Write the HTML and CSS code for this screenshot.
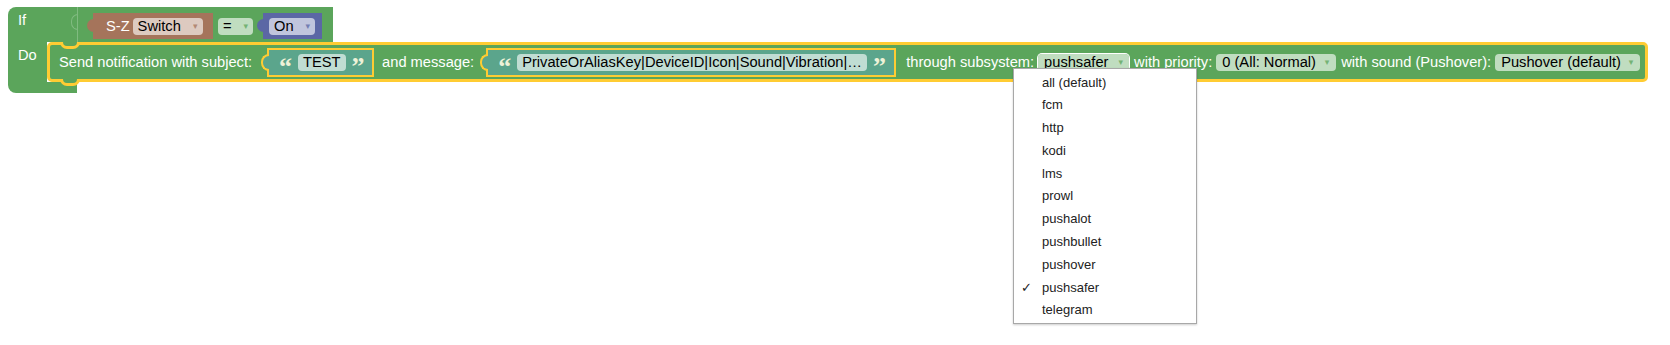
FILE: index.html
```html
<!DOCTYPE html>
<html lang="en">
<head>
    <meta charset="UTF-8">
    <meta name="viewport" content="width=device-width, initial-scale=1.0">
    <title>Blockly - notification</title>
    <link rel="stylesheet" href="styles.css">
</head>
<body>

<div class="canvas">
    <div class="if-block">
        <div class="if-row">
            <div class="if-head">If</div>
            <div class="cmp">
                <div class="val brown"><span class="lbl">S-Z</span><span class="field">Switch<i class="arr">▾</i></span></div>
                <span class="field eq">=<i class="arr">▾</i></span>
                <div class="val blue"><span class="field">On<i class="arr">▾</i></span></div>
            </div>
        </div>

        <div class="do-row">
            <div class="do-head">Do</div>
            <div class="stmt">
                <span class="lbl">Send notification with subject:</span>
                <div class="txt subj"><span class="q">“</span><span class="field">TEST</span><span class="q">”</span></div>
                <span class="lbl msg-lbl">and message:</span>
                <div class="txt msg"><span class="q">“</span><span class="field">PrivateOrAliasKey|DeviceID|Icon|Sound|Vibration|…</span><span class="q">”</span></div>
                <span class="lbl sys-lbl">through subsystem:</span>
                <span class="field active f-sys">pushsafer<i class="arr">▾</i></span>
                <span class="lbl">with priority:</span>
                <span class="field f-prio">0 (All: Normal)<i class="arr">▾</i></span>
                <span class="lbl">with sound (Pushover):</span>
                <span class="field f-sound">Pushover (default)<i class="arr">▾</i></span>
            </div>
        </div>

        <div class="if-foot"></div>
    </div>

    <ul class="menu">
        <li>all (default)</li>
        <li>fcm</li>
        <li>http</li>
        <li>kodi</li>
        <li>lms</li>
        <li>prowl</li>
        <li>pushalot</li>
        <li>pushbullet</li>
        <li>pushover</li>
        <li class="checked">pushsafer</li>
        <li>telegram</li>
    </ul>
</div>

</body>
</html>
```

FILE: styles.css
```css
body {
    margin: 0;
    background-color: #fff;
    font-family: "Liberation Sans", Arial, sans-serif;
    font-size: 14.67px;
}

.canvas {
    position: relative;
    height: 345px;
    padding: 7px 0 0 8px;
    box-sizing: border-box;
}

.if-block {
    display: flex;
    flex-direction: column;
    align-items: flex-start;
}

/* top row : If + compare block */
.if-row {
    display: flex;
    height: 35px;
    width: 325px;
    background-color: #5ba55b;
    border-radius: 8px 0 0 0;
}

.if-head {
    position: relative;
    width: 70px;
    padding: 5px 0 0 10px;
    box-sizing: border-box;
    color: #fff;
    line-height: 17px;
    border-right: 1px solid #80bb80;
}

.if-head::after {
    content: "";
    position: absolute;
    right: -1px;
    top: 7px;
    width: 6px;
    height: 14px;
    border: 1px solid #80bb80;
    border-right: none;
    border-radius: 7px 0 0 7px;
}

.cmp {
    display: flex;
    align-items: flex-start;
    padding: 6px 0 0 15px;
}

.val {
    position: relative;
    display: flex;
    align-items: center;
    height: 26px;
    color: #fff;
    line-height: 17px;
}

.val::before {
    content: "";
    position: absolute;
    left: -6px;
    top: 6px;
    width: 7px;
    height: 13px;
    background-color: inherit;
    border-radius: 7px 0 0 7px;
}

.brown {
    --c: #a5745b;
    background-color: #a5745b;
    width: 120px;
    padding-left: 12px;
    box-sizing: border-box;
}

.brown .field {
    margin-left: 3px;
    width: 70px;
}

.blue {
    --c: #5b67a5;
    background-color: #5b67a5;
    width: 59px;
    padding-left: 6px;
    box-sizing: border-box;
    margin-left: 10px;
}

.blue .field {
    width: 46px;
}

.eq {
    margin: 5px 0 0 5px;
    width: 35px;
}

/* fields */
.field {
    --c: #5ba55b;
    display: inline-flex;
    align-items: center;
    flex-shrink: 0;
    height: 17px;
    padding: 0 5px;
    box-sizing: border-box;
    background-color: rgba(255, 255, 255, 0.62);
    border-radius: 4px;
    color: #000;
    line-height: 17px;
    white-space: nowrap;
}

.brown .field { --c: #a5745b; }
.blue .field { --c: #5b67a5; }

.arr {
    font-style: normal;
    font-family: "DejaVu Sans", sans-serif;
    font-size: 9px;
    color: var(--c);
    opacity: 0.75;
    margin-left: auto;
}

.field.active {
    box-shadow: 0 0 0 1px #fff;
}

.f-sys {
    width: 91px;
    padding: 0 6px;
}

.f-prio {
    width: 120px;
    padding: 0 7px 0 6px;
}

.f-sound {
    width: 145px;
    padding: 0 7px 0 6px;
}

/* Do row */
.do-row {
    display: flex;
    height: 40px;
}

.do-head {
    width: 39px;
    flex-shrink: 0;
    padding: 5px 0 0 10px;
    box-sizing: border-box;
    background-color: #5ba55b;
    color: #fff;
    line-height: 17px;
}

.stmt {
    position: relative;
    display: flex;
    align-items: center;
    gap: 4px;
    flex-shrink: 0;
    width: 1601px;
    height: 40px;
    padding-left: 8px;
    box-sizing: border-box;
    background-color: #5ba55b;
    border: 3px solid #fc3;
    border-radius: 5px;
    color: #fff;
}

.stmt::before {
    content: "";
    position: absolute;
    left: 10px;
    top: -3px;
    width: 14px;
    height: 4px;
    background-color: #5ba55b;
    border: 3px solid #fc3;
    border-top: none;
    border-radius: 0 0 9px 9px;
}

.stmt::after {
    content: "";
    position: absolute;
    left: 10px;
    bottom: -7px;
    width: 14px;
    height: 4px;
    background-color: #5ba55b;
    border: 3px solid #fc3;
    border-top: none;
    border-radius: 0 0 9px 9px;
}

.lbl {
    white-space: nowrap;
    margin-left: 1px;
}

/* text blocks */
.txt {
    position: relative;
    display: flex;
    align-items: center;
    gap: 6px;
    flex-shrink: 0;
    height: 29px;
    padding: 0 12px 0 10px;
    box-sizing: border-box;
    background-color: #5ba58c;
    border: 2px solid #fc3;
}

.txt::before {
    content: "";
    position: absolute;
    left: -8px;
    top: 4px;
    width: 6px;
    height: 13px;
    background-color: #5ba58c;
    border: 2px solid #fc3;
    border-right: none;
    border-radius: 8px 0 0 8px;
}

.txt .field {
    --c: #5ba58c;
}

.subj {
    margin-left: 11px;
    width: 107px;
}

.msg {
    margin-left: 8px;
    width: 410px;
}

.msg-lbl {
    margin-left: 4px;
}

.sys-lbl {
    margin-left: 6px;
}

.q {
    font-family: "Liberation Serif", serif;
    font-weight: bold;
    font-size: 26px;
    line-height: 26px;
    height: 17px;
    color: #eef2d8;
}

.if-foot {
    width: 69px;
    height: 11px;
    background-color: #5ba55b;
    border-radius: 0 0 0 8px;
}

/* dropdown menu */
.menu {
    position: absolute;
    left: 1013px;
    top: 68px;
    width: 184px;
    margin: 0;
    padding: 2.5px 0 1px;
    box-sizing: border-box;
    list-style: none;
    background-color: #fff;
    border: 1px solid #a8a8a8;
    box-shadow: 0 1px 2px rgba(0, 0, 0, 0.2);
    font-size: 13px;
    color: #222;
}

.menu li {
    position: relative;
    height: 22.8px;
    line-height: 22.8px;
    padding-left: 28px;
}

.menu li.checked::before {
    content: "✓";
    position: absolute;
    left: 7px;
    font-family: "DejaVu Sans", sans-serif;
    font-size: 13px;
}
```
